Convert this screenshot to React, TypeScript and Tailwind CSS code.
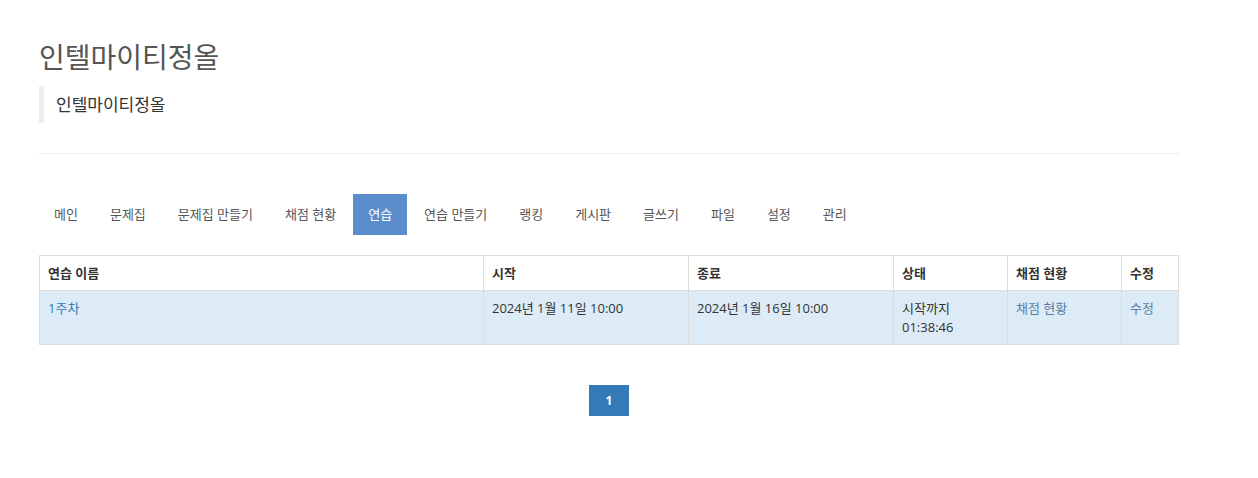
const navItems = ['메인', '문제집', '문제집 만들기', '채점 현황', '연습', '연습 만들기', '랭킹', '게시판', '글쓰기', '파일', '설정', '관리'];

function App() {
  return (
    <div className="min-h-screen bg-white text-[13px] text-[#333]" style={{ fontFamily: '"Open Sans", "Noto Sans CJK KR", sans-serif' }}>
      <div className="ml-[39px] w-[1140px] pt-[41px]">
        <h1 className="text-[28px] leading-[33px] text-[#555]">인텔마이티정올</h1>

        <blockquote className="mt-[12px] border-l-[5px] border-[#eee] py-[6px] pl-[12px] text-[17px] leading-[25px] text-[#333]">
          인텔마이티정올
        </blockquote>

        <hr className="mt-[30px] border-t border-[#eee]" />

        <ul className="mt-[40px] flex">
          {navItems.map((item, i) => (
            <li key={item} className={i === 0 ? '' : 'ml-[2px]'}>
              <a
                className={
                  item === '연습'
                    ? 'block bg-[#5b8ccb] px-[15px] py-[11px] leading-[19px] text-white'
                    : 'block px-[15px] py-[11px] leading-[19px] text-[#555]'
                }
              >
                {item}
              </a>
            </li>
          ))}
        </ul>

        <table className="mt-[20px] w-full border-collapse border border-[#ddd]">
          <thead>
            <tr className="text-left">
              <th className="w-[444px] border border-[#ddd] px-[8px] py-[8px] font-bold leading-[18px]">연습 이름</th>
              <th className="w-[205px] border border-[#ddd] px-[8px] py-[8px] font-bold leading-[18px]">시작</th>
              <th className="w-[205px] border border-[#ddd] px-[8px] py-[8px] font-bold leading-[18px]">종료</th>
              <th className="w-[114px] border border-[#ddd] px-[8px] py-[8px] font-bold leading-[18px]">상태</th>
              <th className="w-[114px] border border-[#ddd] px-[8px] py-[8px] font-bold leading-[18px]">채점 현황</th>
              <th className="border border-[#ddd] px-[8px] py-[8px] font-bold leading-[18px]">수정</th>
            </tr>
          </thead>
          <tbody>
            <tr className="bg-[#dcebf6] align-top">
              <td className="border border-[#ddd] px-[8px] py-[8px] leading-[18.5px]">
                <a className="text-[#337ab7]">1주차</a>
              </td>
              <td className="border border-[#ddd] px-[8px] py-[8px] leading-[18.5px]">2024년 1월 11일 10:00</td>
              <td className="border border-[#ddd] px-[8px] py-[8px] leading-[18.5px]">2024년 1월 16일 10:00</td>
              <td className="border border-[#ddd] px-[8px] py-[8px] leading-[18.5px]">
                시작까지
                <br />
                01:38:46
              </td>
              <td className="border border-[#ddd] px-[8px] py-[8px] leading-[18.5px]">
                <a className="text-[#5a7fa8]">채점 현황</a>
              </td>
              <td className="border border-[#ddd] px-[8px] py-[8px] leading-[18.5px]">
                <a className="text-[#5a7fa8]">수정</a>
              </td>
            </tr>
          </tbody>
        </table>

        <div className="mt-[40px] flex justify-center">
          <span className="flex h-[31px] w-[40px] items-center justify-center bg-[#337ab7] text-[12px] font-bold text-white">1</span>
        </div>
      </div>
    </div>
  );
}

export default App;
